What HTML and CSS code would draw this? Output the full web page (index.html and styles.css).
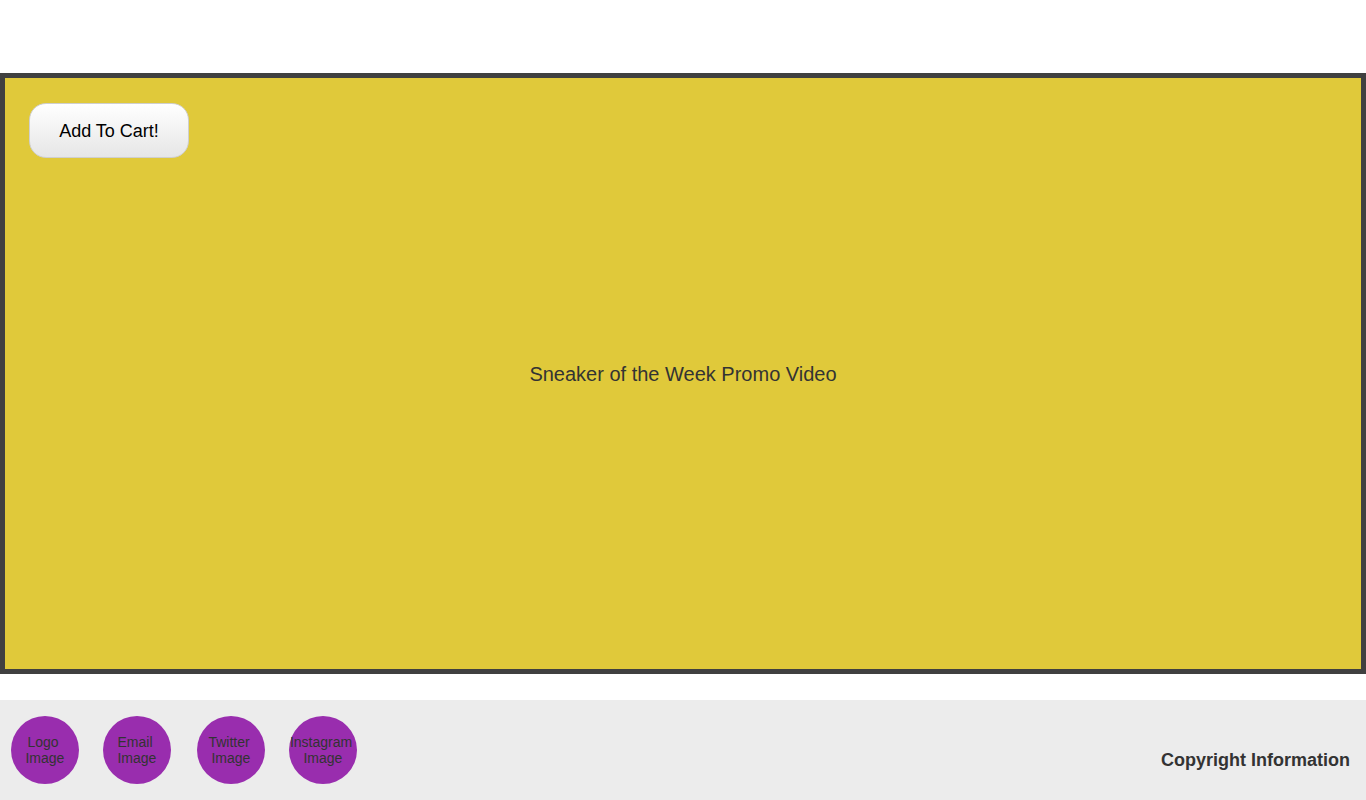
FILE: index.html
```html
<!DOCTYPE html>
<html lang="en">
<head>
<meta charset="utf-8">
<title>Sneaker of the Week</title>
<link rel="stylesheet" href="styles.css">
</head>
<body>
<header class="top"></header>
<section class="promo">
  <button class="cart-btn">Add To Cart!</button>
  <p class="promo-text">Sneaker of the Week Promo Video</p>
</section>
<footer class="footer">
  <ul class="socials">
    <li class="circle c1">Logo<br>&nbsp;Image</li>
    <li class="circle c2">Email<br>&nbsp;Image</li>
    <li class="circle c3">Twitter<br>&nbsp;Image</li>
    <li class="circle c4">Instagram<br>&nbsp;Image</li>
  </ul>
  <p class="copyright">Copyright Information</p>
</footer>
</body>
</html>
```

FILE: styles.css
```css
* { box-sizing: border-box; }
html, body { margin: 0; padding: 0; }
body {
  font-family: "Liberation Sans", Arial, sans-serif;
  background: #fff;
  color: #333;
  width: 1366px;
  height: 800px;
  overflow: hidden;
}
.top { height: 73px; }
.promo {
  height: 601px;
  background: #e0c93a;
  border: 5px solid #404040;
  display: flex;
  flex-direction: column;
  padding: 25px 25px 25px 24px;
}
.cart-btn {
  align-self: flex-start;
  width: 160px;
  height: 55px;
  border: 1px solid #cfcfcf;
  border-radius: 17px;
  background: linear-gradient(#ffffff, #e6e6e6);
  font-family: "Liberation Sans", Arial, sans-serif;
  font-size: 18px;
  color: #000;
  padding: 2px 0 0 0;
}
.promo-text {
  margin: 0;
  flex: 1;
  display: flex;
  align-items: center;
  justify-content: center;
  font-size: 20px;
  color: #333;
  padding-bottom: 57px;
  padding-top: 4px;
  padding-left: 1px;
}
.footer {
  margin-top: 26px;
  height: 100px;
  background: #ececec;
  display: flex;
  justify-content: space-between;
  align-items: center;
}
.socials {
  list-style: none;
  margin: 0;
  padding: 0 0 0 11px;
  display: flex;
}
.circle {
  width: 68px;
  height: 68px;
  border-radius: 50%;
  background: #992dae;
  color: #333;
  font-size: 14px;
  line-height: 16px;
  display: flex;
  align-items: center;
  justify-content: center;
  text-align: center;
  white-space: nowrap;
  padding: 0 4px 1px 0;
}
.c2 { margin-left: 24px; }
.c3 { margin-left: 26px; }
.c4 { margin-left: 24px; }
.copyright {
  margin: 20px 16px 0 0;
  font-size: 18px;
  font-weight: bold;
  color: #333;
}
```
